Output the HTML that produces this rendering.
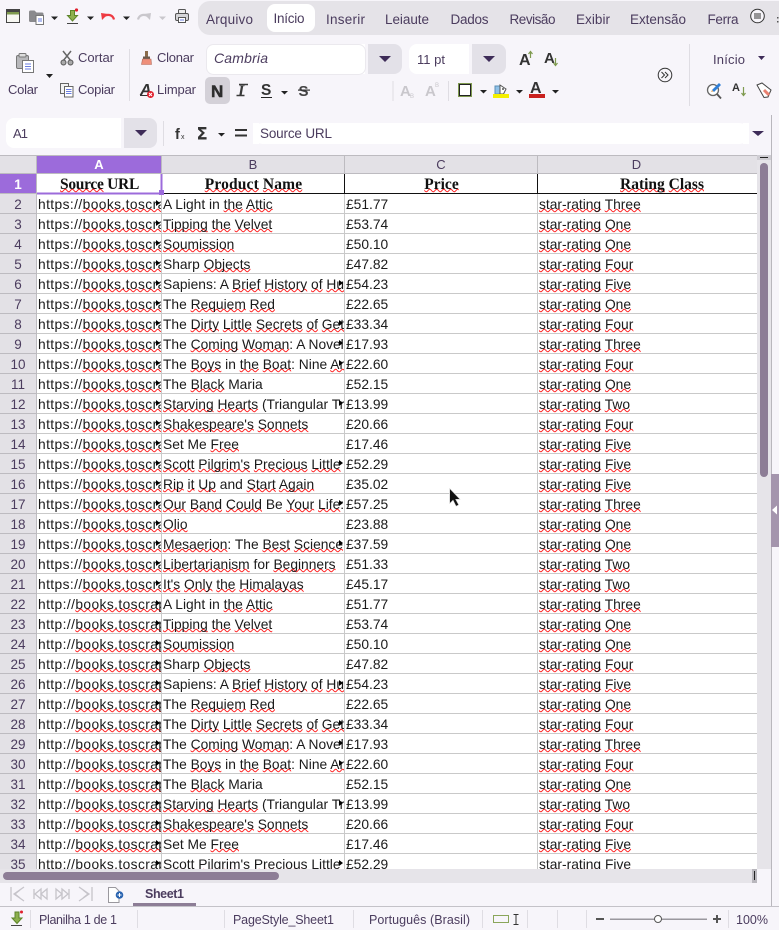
<!DOCTYPE html>
<html><head><meta charset="utf-8"><title>Sheet1</title>
<style>
html,body{margin:0;padding:0;width:779px;height:930px;overflow:hidden;background:#f7f5fa}
#g{position:absolute;left:0;top:155px;width:757px;height:714px;overflow:hidden;background:#fff}
table{border-collapse:separate;border-spacing:0;table-layout:fixed;width:758px;font:13.8px/17px "Liberation Sans",sans-serif;color:#1a1a1a}
td,th{box-sizing:border-box;height:20px;padding:2px 0 0 1px;border-right:1px solid #c9c9c9;border-bottom:1px solid #c9c9c9;white-space:nowrap;overflow:hidden;position:relative;text-align:left;font-weight:400}
.h th{height:19px;background:#e3e1e6;color:#4b3c5e;text-align:center;font-size:13px;line-height:17px;padding:0;border-top:1px solid #bdbbc0;border-color:#bdbbc0}
.h th.s{background:#9c6bdb;color:#fff;font-weight:700}
.h th.d{padding-right:22px}
th.r{background:#e3e1e6;color:#4b3c5e;text-align:center;padding:2px 0 0 0;font-size:13.5px;border-color:#bdbbc0}
th.rs{background:#9c6bdb;color:#fff;font-weight:700;text-align:center;padding:2px 0 0 0;font-size:13.5px;border-color:#bdbbc0}
.t td{font:700 15.5px/17px "Liberation Serif",serif;text-align:center;border-right-color:#111;border-bottom-color:#111;color:#111}
.t td.d{text-align:left;padding-left:82px}
td.a{letter-spacing:.4px}
u{text-decoration:underline wavy #f22 1px;text-underline-offset:-1px;text-decoration-skip-ink:none}
.o::after{content:"";position:absolute;right:1px;top:6px;border-left:4px solid #000;border-top:3.5px solid transparent;border-bottom:3.5px solid transparent}
svg{position:absolute;left:0;top:0}
svg text{font-family:"Liberation Sans",sans-serif;fill:#4b3c5e}
</style></head><body>
<div id="g"><table>
<colgroup><col style="width:37px"><col style="width:125px"><col style="width:183px"><col style="width:193px"><col style="width:220px"></colgroup>
<tr class="h"><th></th><th class="s">A</th><th>B</th><th>C</th><th class="d">D</th></tr>
<tr class="t"><th class="rs">1</th><td style="letter-spacing:-.3px"><u>Source</u> URL</td><td style="letter-spacing:.15px"><u>Product</u> <u>Name</u></td><td><u>Price</u></td><td class="d"><u>Rating</u> <u>Class</u></td></tr>
<tr><th class="r">2</th><td class="a o">https://<u>books.toscrape.com/</u></td><td>A Light in <u>the</u> <u>Attic</u></td><td>£51.77</td><td><u>star-rating</u> <u>Three</u></td></tr>
<tr><th class="r">3</th><td class="a o">https://<u>books.toscrape.com/</u></td><td><u>Tipping</u> <u>the</u> <u>Velvet</u></td><td>£53.74</td><td><u>star-rating</u> <u>One</u></td></tr>
<tr><th class="r">4</th><td class="a o">https://<u>books.toscrape.com/</u></td><td><u>Soumission</u></td><td>£50.10</td><td><u>star-rating</u> <u>One</u></td></tr>
<tr><th class="r">5</th><td class="a o">https://<u>books.toscrape.com/</u></td><td>Sharp <u>Objects</u></td><td>£47.82</td><td><u>star-rating</u> <u>Four</u></td></tr>
<tr><th class="r">6</th><td class="a o">https://<u>books.toscrape.com/</u></td><td class="o">Sapiens: A <u>Brief</u> <u>History</u> <u>of</u> <u>Humankind</u></td><td>£54.23</td><td><u>star-rating</u> <u>Five</u></td></tr>
<tr><th class="r">7</th><td class="a o">https://<u>books.toscrape.com/</u></td><td>The <u>Requiem</u> <u>Red</u></td><td>£22.65</td><td><u>star-rating</u> <u>One</u></td></tr>
<tr><th class="r">8</th><td class="a o">https://<u>books.toscrape.com/</u></td><td class="o">The <u>Dirty</u> <u>Little</u> <u>Secrets</u> <u>of</u> <u>Getting</u> <u>Your</u></td><td>£33.34</td><td><u>star-rating</u> <u>Four</u></td></tr>
<tr><th class="r">9</th><td class="a o">https://<u>books.toscrape.com/</u></td><td class="o">The <u>Coming</u> <u>Woman</u>: A Novel Based</td><td>£17.93</td><td><u>star-rating</u> <u>Three</u></td></tr>
<tr><th class="r">10</th><td class="a o">https://<u>books.toscrape.com/</u></td><td class="o">The <u>Boys</u> in <u>the</u> <u>Boat</u>: Nine <u>Americans</u></td><td>£22.60</td><td><u>star-rating</u> <u>Four</u></td></tr>
<tr><th class="r">11</th><td class="a o">https://<u>books.toscrape.com/</u></td><td>The <u>Black</u> Maria</td><td>£52.15</td><td><u>star-rating</u> <u>One</u></td></tr>
<tr><th class="r">12</th><td class="a o">https://<u>books.toscrape.com/</u></td><td class="o"><u>Starving</u> <u>Hearts</u> (Triangular Trade Trilogy</td><td>£13.99</td><td><u>star-rating</u> <u>Two</u></td></tr>
<tr><th class="r">13</th><td class="a o">https://<u>books.toscrape.com/</u></td><td><u>Shakespeare's</u> <u>Sonnets</u></td><td>£20.66</td><td><u>star-rating</u> <u>Four</u></td></tr>
<tr><th class="r">14</th><td class="a o">https://<u>books.toscrape.com/</u></td><td>Set Me <u>Free</u></td><td>£17.46</td><td><u>star-rating</u> <u>Five</u></td></tr>
<tr><th class="r">15</th><td class="a o">https://<u>books.toscrape.com/</u></td><td class="o"><u>Scott</u> <u>Pilgrim's</u> <u>Precious</u> <u>Little</u> Life</td><td>£52.29</td><td><u>star-rating</u> <u>Five</u></td></tr>
<tr><th class="r">16</th><td class="a o">https://<u>books.toscrape.com/</u></td><td><u>Rip</u> <u>it</u> <u>Up</u> and <u>Start</u> <u>Again</u></td><td>£35.02</td><td><u>star-rating</u> <u>Five</u></td></tr>
<tr><th class="r">17</th><td class="a o">https://<u>books.toscrape.com/</u></td><td class="o"><u>Our</u> <u>Band</u> <u>Could</u> Be <u>Your</u> <u>Life</u>: Scenes from</td><td>£57.25</td><td><u>star-rating</u> <u>Three</u></td></tr>
<tr><th class="r">18</th><td class="a o">https://<u>books.toscrape.com/</u></td><td><u>Olio</u></td><td>£23.88</td><td><u>star-rating</u> <u>One</u></td></tr>
<tr><th class="r">19</th><td class="a o">https://<u>books.toscrape.com/</u></td><td class="o"><u>Mesaerion</u>: The <u>Best</u> <u>Science</u> Fiction Stories</td><td>£37.59</td><td><u>star-rating</u> <u>One</u></td></tr>
<tr><th class="r">20</th><td class="a o">https://<u>books.toscrape.com/</u></td><td><u>Libertarianism</u> for <u>Beginners</u></td><td>£51.33</td><td><u>star-rating</u> <u>Two</u></td></tr>
<tr><th class="r">21</th><td class="a o">https://<u>books.toscrape.com/</u></td><td><u>It's</u> <u>Only</u> <u>the</u> <u>Himalayas</u></td><td>£45.17</td><td><u>star-rating</u> <u>Two</u></td></tr>
<tr><th class="r">22</th><td class="a o">http://<u>books.toscrape.com/</u></td><td>A Light in <u>the</u> <u>Attic</u></td><td>£51.77</td><td><u>star-rating</u> <u>Three</u></td></tr>
<tr><th class="r">23</th><td class="a o">http://<u>books.toscrape.com/</u></td><td><u>Tipping</u> <u>the</u> <u>Velvet</u></td><td>£53.74</td><td><u>star-rating</u> <u>One</u></td></tr>
<tr><th class="r">24</th><td class="a o">http://<u>books.toscrape.com/</u></td><td><u>Soumission</u></td><td>£50.10</td><td><u>star-rating</u> <u>One</u></td></tr>
<tr><th class="r">25</th><td class="a o">http://<u>books.toscrape.com/</u></td><td>Sharp <u>Objects</u></td><td>£47.82</td><td><u>star-rating</u> <u>Four</u></td></tr>
<tr><th class="r">26</th><td class="a o">http://<u>books.toscrape.com/</u></td><td class="o">Sapiens: A <u>Brief</u> <u>History</u> <u>of</u> <u>Humankind</u></td><td>£54.23</td><td><u>star-rating</u> <u>Five</u></td></tr>
<tr><th class="r">27</th><td class="a o">http://<u>books.toscrape.com/</u></td><td>The <u>Requiem</u> <u>Red</u></td><td>£22.65</td><td><u>star-rating</u> <u>One</u></td></tr>
<tr><th class="r">28</th><td class="a o">http://<u>books.toscrape.com/</u></td><td class="o">The <u>Dirty</u> <u>Little</u> <u>Secrets</u> <u>of</u> <u>Getting</u> <u>Your</u></td><td>£33.34</td><td><u>star-rating</u> <u>Four</u></td></tr>
<tr><th class="r">29</th><td class="a o">http://<u>books.toscrape.com/</u></td><td class="o">The <u>Coming</u> <u>Woman</u>: A Novel Based</td><td>£17.93</td><td><u>star-rating</u> <u>Three</u></td></tr>
<tr><th class="r">30</th><td class="a o">http://<u>books.toscrape.com/</u></td><td class="o">The <u>Boys</u> in <u>the</u> <u>Boat</u>: Nine <u>Americans</u></td><td>£22.60</td><td><u>star-rating</u> <u>Four</u></td></tr>
<tr><th class="r">31</th><td class="a o">http://<u>books.toscrape.com/</u></td><td>The <u>Black</u> Maria</td><td>£52.15</td><td><u>star-rating</u> <u>One</u></td></tr>
<tr><th class="r">32</th><td class="a o">http://<u>books.toscrape.com/</u></td><td class="o"><u>Starving</u> <u>Hearts</u> (Triangular Trade Trilogy</td><td>£13.99</td><td><u>star-rating</u> <u>Two</u></td></tr>
<tr><th class="r">33</th><td class="a o">http://<u>books.toscrape.com/</u></td><td><u>Shakespeare's</u> <u>Sonnets</u></td><td>£20.66</td><td><u>star-rating</u> <u>Four</u></td></tr>
<tr><th class="r">34</th><td class="a o">http://<u>books.toscrape.com/</u></td><td>Set Me <u>Free</u></td><td>£17.46</td><td><u>star-rating</u> <u>Five</u></td></tr>
<tr><th class="r">35</th><td class="a o">http://<u>books.toscrape.com/</u></td><td class="o"><u>Scott</u> <u>Pilgrim's</u> <u>Precious</u> <u>Little</u> Life</td><td>£52.29</td><td><u>star-rating</u> <u>Five</u></td></tr>
</table></div>

<svg width="779" height="930" viewBox="0 0 779 930" xmlns="http://www.w3.org/2000/svg">
<!-- A1 cursor -->
<rect x="160.500" y="174" width="2" height="20" fill="#9c6bdb"/><rect x="37" y="192.500" width="125" height="2" fill="#9c6bdb"/><rect x="159" y="190" width="5" height="5" fill="#9c6bdb"/>

<!-- top toolbar -->
<rect x="6.500" y="9.500" width="13" height="13" fill="#f7f7f2" stroke="#444"/><rect x="7" y="10" width="12" height="2" fill="#444"/><rect x="7" y="12" width="12" height="2.500" fill="#7f9a4f"/>
<path d="M29 12a1.500 1.500 0 0 1 1.500-1.500h4l2 2h5.500a1.500 1.500 0 0 1 1.500 1.500v8H30.500a1.500 1.500 0 0 1-1.500-1.500z" fill="#8a8a8d"/><rect x="36" y="15.500" width="7.500" height="9" fill="#fff" stroke="#777"/><path d="M38 19h4M38 21h4" stroke="#6a7de0"/>
<polygon points="51,16.500 58,16.500 54.500,20" fill="#222"/>
<path d="M70.500 10.500h4v5h3l-5 5.500-5-5.500h3z" fill="#8db04e" stroke="#5d8429"/><rect x="67" y="23" width="11" height="1" fill="#444"/><circle cx="76.500" cy="10" r="1.600" fill="#e0202e"/>
<polygon points="87,16.500 94,16.500 90.500,20" fill="#222"/>
<path d="M114 19.500c-1-4-5-6-10-3.500" fill="none" stroke="#ee3a42" stroke-width="2.200"/><polygon points="101,13 108,14 102,20" fill="#ee3a42"/>
<polygon points="123,16.500 130,16.500 126.500,20" fill="#222"/>
<path d="M138 19.500c1-4 5-6 10-3.500" fill="none" stroke="#c9c7cc" stroke-width="2.200"/><polygon points="151,13 144,14 150,20" fill="#c9c7cc"/>
<polygon points="159,16.500 166,16.500 162.500,20" fill="#c9c7cc"/>
<rect x="178.500" y="9.500" width="7" height="4" rx="1" fill="#eee" stroke="#555"/><rect x="175.500" y="13.500" width="13" height="7" rx="1.500" fill="#d5d5d8" stroke="#555"/><rect x="178.500" y="17.500" width="7" height="5" fill="#fff" stroke="#555"/><path d="M180 20h4" stroke="#6a7de0"/>

<path d="M210 1H779V35H210a12 12 0 0 1-12-12V13a12 12 0 0 1 12-12z" fill="#e5e3e8"/>
<rect x="267" y="4" width="48" height="28" rx="8" fill="#fff"/>
<g font-size="13.500">
<text x="206" y="24" textLength="47">Arquivo</text>
<text x="273.500" y="23" textLength="31">Início</text>
<text x="326" y="24" textLength="39">Inserir</text>
<text x="385" y="24" textLength="44">Leiaute</text>
<text x="450.500" y="24" textLength="38">Dados</text>
<text x="509.500" y="24" textLength="46">Revisão</text>
<text x="576" y="24" textLength="34">Exibir</text>
<text x="630" y="24" textLength="56">Extensão</text>
<text x="707.500" y="24" textLength="31">Ferra</text>
</g>
<circle cx="757.500" cy="16" r="6.800" fill="#f7f5fa" stroke="#333"/><path d="M754 14h7M754 16h7M754 18h7" stroke="#333"/>
<rect x="777" y="17" width="1.500" height="1.500" fill="#555"/><rect x="777" y="21" width="1.500" height="1.500" fill="#555"/>

<!-- ribbon: clipboard -->
<rect x="16.500" y="55.500" width="12" height="13" rx="1.500" fill="#b8b8bb" stroke="#777"/><rect x="19" y="53.500" width="7" height="3.500" rx="1" fill="#ddd" stroke="#777"/><rect x="22.500" y="60.500" width="11" height="12" fill="#fff" stroke="#777"/><path d="M25 64h6M25 66.500h6M25 69h6" stroke="#6a7de0"/>
<polygon points="46,74 53,74 49.500,78" fill="#222"/>
<path d="M63 51l8 10M71 51l-8 10" stroke="#666" stroke-width="1.500"/><circle cx="63.500" cy="62.500" r="2.500" fill="#aaa" stroke="#555"/><circle cx="70.500" cy="62.500" r="2.500" fill="#aaa" stroke="#555"/>
<rect x="60.500" y="83.500" width="8" height="10" fill="#f3f3f3" stroke="#666"/><rect x="64.500" y="86.500" width="8.500" height="10.500" fill="#fff" stroke="#666"/><path d="M66 89.500h5.500M66 91.500h5.500M66 93.500h5.500" stroke="#6a7de0"/>
<g font-size="13">
<text x="78" y="62" textLength="36">Cortar</text>
<text x="8" y="94" textLength="30">Colar</text>
<text x="78" y="94" textLength="37">Copiar</text>
<text x="157" y="62" textLength="37">Clonar</text>
<text x="157" y="94" textLength="39">Limpar</text>
</g>
<rect x="129" y="49" width="1" height="52" fill="#dfdde3"/>
<rect x="145" y="51" width="3" height="6" fill="#8a6a4a"/><rect x="143" y="56.500" width="7" height="2.500" fill="#6b5b4d"/><path d="M142.500 59h8.500l.5 5.500h-10z" fill="#ef8f7a" stroke="#b36a5a" stroke-width=".6"/>
<text x="140" y="95" font-size="16" font-weight="700" font-style="italic" style="fill:#333">A</text><rect x="140" y="95" width="9" height="1" fill="#333"/><circle cx="150.500" cy="94.500" r="3.500" fill="#e0202e"/><path d="M149 93l3 3M152 93l-3 3" stroke="#fff"/>

<!-- font -->
<path d="M214 44H365V74H214a8 8 0 0 1-8-8V52a8 8 0 0 1 8-8z" fill="#fff"/><rect x="206.500" y="44.500" width="159" height="30" rx="7" fill="none" stroke="#ebe9ee"/>
<path d="M368 44H394a8 8 0 0 1 8 8V66a8 8 0 0 1-8 8H368z" fill="#e3e1e8"/>
<polygon points="379,56 391,56 385,62" fill="#3e2c58"/>
<text x="214" y="63" font-size="14" font-style="italic" textLength="54">Cambria</text>
<path d="M417 44H469V74H417a8 8 0 0 1-8-8V52a8 8 0 0 1 8-8z" fill="#fff"/>
<path d="M472 44H498a8 8 0 0 1 8 8V66a8 8 0 0 1-8 8H472z" fill="#e3e1e8"/>
<polygon points="483,56 495,56 489,62" fill="#3e2c58"/>
<text x="417" y="64" font-size="13" textLength="28">11 pt</text>
<text x="519" y="65" font-size="16" font-weight="700" style="fill:#333">A</text><path d="M530.500 58v-6M528.500 54l2-2.500 2 2.500" fill="none" stroke="#7f9a4f" stroke-width="1.200"/>
<text x="544" y="63" font-size="15" font-weight="700" style="fill:#333">A</text><path d="M555.500 58v7M553.500 63l2 2.500 2-2.500" fill="none" stroke="#7f9a4f" stroke-width="1.200"/>

<!-- format row -->
<rect x="205" y="77" width="25" height="27" rx="5" fill="#d4d1d8"/>
<text x="211" y="97" font-size="17" font-weight="700" style="fill:#2d2d2d;stroke:#2d2d2d;stroke-width:.5">N</text>
<text x="238" y="96" font-size="16" font-weight="700" font-style="italic" style="font-family:'Liberation Serif',serif;fill:#3a3a3a">I</text>
<path d="M239 84.500h9M236.500 95.500h8" stroke="#3a3a3a" stroke-width="1.600"/>
<text x="261" y="95" font-size="15.500" font-weight="700" style="fill:#333">S</text><rect x="261" y="97" width="11" height="1" fill="#222"/>
<polygon points="281,91 288,91 284.500,94.500" fill="#222"/>
<text x="298.500" y="96" font-size="15" font-weight="700" style="fill:#444">S</text><rect x="298" y="89.500" width="12" height="1.200" fill="#333"/>
<rect x="392.500" y="81" width="1" height="20" fill="#dfdde3"/>
<text x="400" y="96" font-size="15" font-weight="700" style="fill:#c9c7cc">A</text><text x="410" y="98" font-size="6" style="fill:#c9c7cc">B</text>
<text x="425" y="96" font-size="15" font-weight="700" style="fill:#c9c7cc">A</text><text x="435" y="87" font-size="6" style="fill:#c9c7cc">B</text>
<rect x="448" y="81" width="1" height="20" fill="#dfdde3"/>
<rect x="458.500" y="83.500" width="13" height="13" fill="#fff" stroke="#7f9a4f"/><rect x="459.500" y="84.500" width="11" height="11" fill="none" stroke="#222"/>
<polygon points="480,90 487,90 483.500,93.500" fill="#222"/>
<path d="M495 86h6v8h-6z" fill="#8fc1e8" stroke="#5b8fb5"/><path d="M500 85l6 4-2.500 5h-3.500z" fill="#fff" stroke="#555"/><circle cx="503" cy="89" r="1" fill="#555"/><rect x="493" y="94" width="16" height="4" fill="#f4f000"/>
<polygon points="516,90 523,90 519.500,93.500" fill="#222"/>
<text x="530" y="93" font-size="16" font-weight="700" style="fill:#333">A</text><rect x="529" y="94" width="16" height="4" fill="#c9211e"/>
<polygon points="552,90 559,90 555.500,93.500" fill="#222"/>

<circle cx="665" cy="75" r="6.800" fill="none" stroke="#333"/><path d="M661.500 72l3 3-3 3M665 72l3 3-3 3" fill="none" stroke="#333"/>
<rect x="689" y="44" width="1" height="62" fill="#dfdde3"/>
<text x="713" y="64" font-size="13" textLength="32">Início</text>
<polygon points="758,56 765,56 761.500,60" fill="#3e2c58"/>
<circle cx="713" cy="90" r="5.500" fill="#fff" stroke="#666" stroke-width="1.300"/><path d="M717 94l4 4.500" stroke="#555" stroke-width="1.800"/><path d="M712 90l7-7 2 2-7 7z" fill="#2f7fd8"/><path d="M712 90l-1 2 2.500-.5z" fill="#e8a860"/>
<text x="732" y="91" font-size="11" font-weight="700" style="fill:#333">A</text><path d="M743.500 87v8M741.500 93l2 2.500 2-2.500" fill="none" stroke="#7f9a4f" stroke-width="1.200"/>
<path d="M757 85l5-2 9 7-3 7-4 .5z" fill="#fff" stroke="#444"/><path d="M764 90l5 5" stroke="#e88070" stroke-width="3"/>

<!-- formula bar -->
<path d="M14 118H121V148H14a8 8 0 0 1-8-8V126a8 8 0 0 1 8-8z" fill="#fff"/>
<path d="M124 118H149a8 8 0 0 1 8 8V140a8 8 0 0 1-8 8H124z" fill="#e3e1e8"/>
<polygon points="135,130 147,130 141,136" fill="#3e2c58"/>
<text x="13" y="138" font-size="13" textLength="15">A1</text>
<rect x="163" y="121" width="1" height="25" fill="#dfdde3"/>
<text x="175" y="139" font-size="14.500" font-weight="700" style="fill:#333">f</text><text x="181" y="139" font-size="7" style="fill:#333">x</text>
<text x="196.500" y="139.500" font-size="16.500" font-weight="700" style="font-family:'DejaVu Sans',sans-serif;fill:#333">Σ</text>
<polygon points="218,133 225,133 221.500,136.500" fill="#222"/>
<rect x="235" y="129" width="12" height="2" fill="#333"/><rect x="235" y="134.500" width="12" height="2" fill="#333"/>
<path d="M253 133a10 10 0 0 1 10-10H739a10 10 0 0 1 10 10a10 10 0 0 1-10 11H263a10 10 0 0 1-10-11z" fill="#fff"/><rect x="253" y="123" width="6" height="21" fill="#fff"/><rect x="743" y="123" width="6" height="21" fill="#fff"/>
<text x="260" y="138" font-size="13.500" textLength="72">Source URL</text>
<polygon points="752,131 764,131 758,136" fill="#3e2c58"/>
<rect x="771" y="115" width="1" height="791" fill="#b9b7bd"/>

<!-- vertical scrollbar -->
<rect x="757" y="155" width="14" height="714" fill="#e6e4e9"/>
<rect x="757" y="155" width="14" height="5" fill="#cfcdd3"/><rect x="760" y="157" width="8" height="1" fill="#222"/>
<rect x="760" y="163" width="8" height="314" rx="4" fill="#8d7d96"/>
<rect x="771" y="474" width="8" height="73" fill="#a495ad"/><polygon points="772,510 777,505.500 777,514.500" fill="#fff"/>

<!-- horizontal scrollbar -->
<rect x="0" y="869" width="757" height="14" fill="#e6e4e9"/>
<rect x="3" y="872" width="276" height="8" rx="4" fill="#8d7d96"/>
<rect x="752" y="869" width="5" height="14" fill="#b9b7bd"/><rect x="754" y="871" width="1" height="9" fill="#222"/>

<!-- sheet tabs -->
<g fill="none" stroke="#c6c4ca" stroke-width="1.300">
<path d="M11 887v14M24 887l-10 7 10 7M20 890l-5 4 5 4"/>
<path d="M34 889v10M47 889l-6 5 6 5V889zM41 889l-6 5 6 5V889z"/>
<path d="M69 889v10M56 889l6 5-6 5V889zM62 889l6 5-6 5V889z"/>
<path d="M92 887v14M79 887l10 7-10 7M83 890l5 4-5 4"/>
</g>
<path d="M108.500 887.500h7l3.500 3.500v11.500h-10.500z" fill="#fff" stroke="#9a989e"/>
<circle cx="119.500" cy="895" r="3.800" fill="#2a64b0"/><path d="M117.500 895h4M119.500 893v4" stroke="#fff"/>
<text x="145" y="898" font-size="12.500" font-weight="700" textLength="39">Sheet1</text>
<rect x="133" y="903" width="63" height="3" fill="#8d7d96"/>
<rect x="0" y="906" width="779" height="1" fill="#c4c2c8"/>

<!-- status bar -->
<path d="M15 912h4v6h3l-5 5.500-5-5.500h3z" fill="#8db04e" stroke="#5d8429"/><rect x="11" y="925" width="11" height="1" fill="#444"/><circle cx="21.500" cy="912" r="1.500" fill="#e0202e"/>
<g fill="#dfdde3">
<rect x="30" y="910" width="1" height="18"/><rect x="137" y="910" width="1" height="18"/><rect x="224" y="910" width="1" height="18"/><rect x="353" y="910" width="1" height="18"/><rect x="482" y="910" width="1" height="18"/><rect x="527" y="910" width="1" height="18"/><rect x="557" y="910" width="1" height="18"/><rect x="586" y="910" width="1" height="18"/><rect x="728" y="910" width="1" height="18"/>
</g>
<g font-size="12.500">
<text x="39" y="924" textLength="78">Planilha 1 de 1</text>
<text x="233" y="924" textLength="101">PageStyle_Sheet1</text>
<text x="369" y="924" textLength="101">Português (Brasil)</text>
<text x="736" y="924" textLength="32">100%</text>
</g>
<rect x="493.500" y="915.500" width="15" height="7" fill="#f7f5fa" stroke="#8aa65a"/>
<path d="M513.500 914.500h5M513.500 924.500h5M516 915v9" stroke="#333" fill="none"/>
<rect x="596" y="918" width="8" height="2" fill="#555"/>
<rect x="610" y="918.500" width="97" height="1.500" fill="#9a989e"/>
<circle cx="658" cy="919" r="3.500" fill="#fff" stroke="#555"/>
<rect x="713" y="918" width="8" height="2" fill="#555"/><rect x="716" y="915" width="2" height="8" fill="#555"/>

<!-- mouse cursor -->
<path d="M449.500 488V504L453 500.500 456 506.500 459 505 456 499.500H460.500z" fill="#111" stroke="#fff" stroke-opacity=".75" stroke-width="1"/>
</svg>
</body></html>
